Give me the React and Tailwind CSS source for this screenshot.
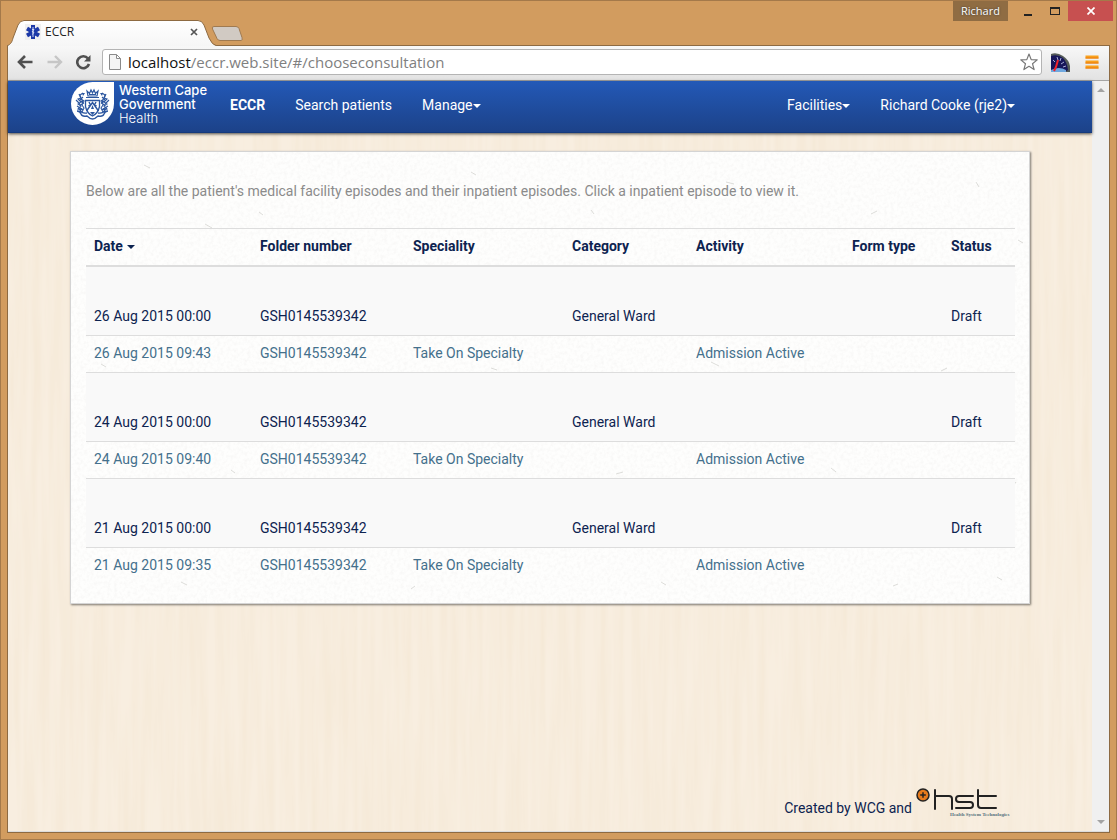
import React from "react";

const columns = [
  { label: "Date", width: "w-[166px]", sorted: true },
  { label: "Folder number", width: "w-[153px]" },
  { label: "Speciality", width: "w-[159px]" },
  { label: "Category", width: "w-[124px]" },
  { label: "Activity", width: "w-[156px]" },
  { label: "Form type", width: "w-[99px]" },
  { label: "Status", width: "w-[72px]" },
];

const episodes = [
  { date: "26 Aug 2015", time: "09:43" },
  { date: "24 Aug 2015", time: "09:40" },
  { date: "21 Aug 2015", time: "09:35" },
];

function Caret({ className = "" }) {
  return (
    <svg className={`inline-block h-1 w-2 align-middle ${className}`} viewBox="0 0 8 4" fill="currentColor" aria-hidden="true">
      <path d="M0 0h8L4 4z" />
    </svg>
  );
}

function WoodTexture() {
  return (
    <svg className="pointer-events-none absolute inset-0 h-full w-full" aria-hidden="true">
      <filter id="wood" x="0" y="0" width="100%" height="100%">
        <feTurbulence type="fractalNoise" baseFrequency="0.12 0.006" numOctaves="3" seed="4" />
        <feColorMatrix values="0 0 0 0 0.84  0 0 0 0 0.7  0 0 0 0 0.5  0.4 0 0 0 -0.11" />
      </filter>
      <rect width="100%" height="100%" filter="url(#wood)" />
    </svg>
  );
}

function PaperTexture() {
  return (
    <svg className="pointer-events-none absolute inset-0 h-full w-full" aria-hidden="true">
      <filter id="paper" x="0" y="0" width="100%" height="100%">
        <feTurbulence type="fractalNoise" baseFrequency="0.3" numOctaves="3" seed="9" />
        <feColorMatrix values="0 0 0 0 0.5  0 0 0 0 0.47  0 0 0 0 0.46  0.2 0 0 0 -0.08" />
      </filter>
      <rect width="100%" height="100%" filter="url(#paper)" />
      <g fill="none" stroke="#cfcfca" strokeWidth="1" opacity=".7">
        <path d="M73 13l6 3M188 60l4 3M134 72l7 4M400 20l5 3M520 58l3 4M655 30l8 2M800 62l6-3M905 30l3 5M947 88l5 3M30 212l5 3M420 216l6 2M640 210l8 4M870 219l6-3M160 318l4 3M545 322l7-2M760 316l5 4M945 330l-4 5M110 430l6 3M340 437l4-3M590 430l5 3M822 434l5-2M926 425l5 3" />
      </g>
    </svg>
  );
}

function TabStrip() {
  return (
    <div className="flex h-[45px] items-start">
      <div className="relative mt-[19px] flex h-[26px] w-[212px] items-center pb-[2px] pl-[18px]">
        <svg className="absolute inset-0 h-full w-full" viewBox="0 0 212 26" aria-hidden="true">
          <defs>
            <linearGradient id="tab" x2="0" y2="1">
              <stop stopColor="#fff" />
              <stop offset="1" stopColor="#f6f6f6" />
            </linearGradient>
          </defs>
          <path d="M0 26C4 24 5 22 6 18L11 5Q13 .5 17 .5H191Q195 .5 197 5L202 18Q205 25 210 26Z" fill="url(#tab)" />
          <path d="M0 26C4 24 5 22 6 18L11 5Q13 .5 17 .5H191Q195 .5 197 5L202 18Q205 25 210 26" fill="none" stroke="#8d6a42" />
        </svg>
        <svg className="relative h-4 w-4" viewBox="0 0 16 16" aria-hidden="true">
          <rect width="16" height="16" fill="#f0f0f0" />
          <path d="M8 1v14M2 4.500l12 7M2 11.500l12-7" stroke="#1c39a8" strokeWidth="4" />
          <path d="M8 3v10M7 5.500h2L7 8h2L7.500 10.500" fill="none" stroke="#dce4fa" strokeWidth=".9" />
        </svg>
        <span className="relative ml-1 font-['Open_Sans'] text-xs text-[#222]">ECCR</span>
        <button aria-label="Close tab" className="relative mr-[21px] ml-auto">
          <svg className="h-2 w-2" viewBox="0 0 8 8" aria-hidden="true">
            <path d="M1 1l6 6M7 1L1 7" stroke="#555" strokeWidth="1.700" />
          </svg>
        </button>
      </div>
      <button aria-label="New tab" className="mt-6 -ml-2">
        <svg className="h-4 w-8" viewBox="0 0 32 16" aria-hidden="true">
          <path d="M3 1.500h22q2 0 3 2l3 9q1 3-1 3H9q-2 0-3-2L1.500 4q-1-2.500 1.500-2.500z" fill="#d1cac3" stroke="#a07a50" />
        </svg>
      </button>
      <div className="ml-auto flex h-5 items-stretch font-['Open_Sans'] text-[11px] text-white">
        <button className="w-[55px] bg-[#8f6c43] [text-shadow:0_0_2px_#333]">Richard</button>
        <button aria-label="Minimize" className="flex w-9 items-end justify-center pb-1 pl-1">
          <svg className="h-1 w-2" viewBox="0 0 8 4" aria-hidden="true"><path d="M0 1h8v2H0z" fill="#222" /></svg>
        </button>
        <button aria-label="Maximize" className="flex w-6 items-center justify-center pr-[2px]">
          <svg className="h-2 w-[10px]" viewBox="0 0 10 8" aria-hidden="true"><path d="M0 0h10v8H0zM1 2v5h8V2z" fill="#222" fillRule="evenodd" /></svg>
        </button>
        <button aria-label="Close window" className="-mr-[3px] flex w-[45px] items-center justify-center bg-[#c75050]">
          <svg className="h-2 w-2" viewBox="0 0 8 8" aria-hidden="true"><path d="M.5.5l7 7M7.500.5l-7 7" stroke="#fff" strokeWidth="1.700" /></svg>
        </button>
      </div>
    </div>
  );
}

function Toolbar() {
  return (
    <div className="flex h-9 items-center border-t border-b border-t-[#8d6a42] border-b-[#a5a5a5] bg-linear-to-b from-[#f8f8f8] to-[#e2e2e2] pr-[10px] pb-[2px] pl-[9px]">
      <button aria-label="Back">
        <svg className="h-4 w-4" viewBox="0 0 16 16" fill="none" stroke="#505050" strokeWidth="2.600" aria-hidden="true">
          <path d="M15.500 8H2.500M8 2L2 8l6 6" />
        </svg>
      </button>
      <button aria-label="Forward" className="ml-[14px]">
        <svg className="h-4 w-4" viewBox="0 0 16 16" fill="none" stroke="#c6c6c6" strokeWidth="2.400" aria-hidden="true">
          <path d="M.5 8h13M8 2l6 6-6 6" />
        </svg>
      </button>
      <button aria-label="Reload" className="ml-3">
        <svg className="h-4 w-4" viewBox="0 0 16 16" aria-hidden="true">
          <path d="M13 4.500A6 6 0 1 0 14 10" fill="none" stroke="#505050" strokeWidth="2.600" />
          <path d="M15.500 1v6.500H9z" fill="#505050" />
        </svg>
      </button>
      <form className="ml-[11px] flex h-[26px] min-w-0 flex-1 items-center rounded-[3px] border border-[#b4b4b4] bg-white px-[6px]" onSubmit={(e) => e.preventDefault()}>
        <svg className="h-4 w-3 shrink-0" viewBox="0 0 12 16" fill="#f4f4f4" stroke="#8a8a8a" aria-hidden="true">
          <path d="M.5.5h7l4 4v11H.5zM7.500.5v4h4" />
        </svg>
        <div className="relative ml-[7px] min-w-0 flex-1 font-['Open_Sans'] text-[15px] leading-6">
          <div className="pointer-events-none truncate text-[#808080]" aria-hidden="true">
            <span className="text-[#111]">localhost</span>/eccr.web.site/#/chooseconsultation
          </div>
          <input
            aria-label="Address"
            defaultValue="localhost/eccr.web.site/#/chooseconsultation"
            className="absolute inset-0 w-full bg-transparent text-transparent caret-black outline-none"
          />
        </div>
        <button type="button" aria-label="Bookmark this page" className="-mr-[3px]">
          <svg className="h-[18px] w-[18px]" viewBox="0 0 18 18" fill="#fff" stroke="#777" strokeWidth="1.200" strokeLinejoin="round" aria-hidden="true">
            <path d="M9 1l2.200 5.600 6 .3-4.700 3.800 1.600 5.900L9 13.300l-5.100 3.300 1.600-5.900L.8 6.900l6-.3z" />
          </svg>
        </button>
      </form>
      <button aria-label="Speed extension" className="ml-[9px]">
        <svg className="h-[19px] w-[19px]" viewBox="0 0 19 19" aria-hidden="true">
          <path d="M0 1Q6-1 12 3Q18 7 19 13V19H0z" fill="#555c58" />
          <path d="M0 3Q7 1 12 5Q16 9 17 17L14 19H0z" fill="#17165a" />
          <path d="M0 17q8-4 15 0v2H0z" fill="#6fa8df" />
          <path d="M6 4l1 3M10 5L9 8M13 9l-3 2M15 13l-3 1M2 7l2 2" stroke="#a9afd8" />
          <path d="M7 7L5 14 3 18" stroke="#f0212b" strokeWidth="2" fill="none" />
        </svg>
      </button>
      <button aria-label="Menu" className="ml-[15px]">
        <svg className="h-[14px] w-[14px]" viewBox="0 0 14 14" aria-hidden="true">
          <path d="M.5.5h13v3H.5zM.5 5.500h13v3H.5zM.5 10.500h13v3H.5z" fill="#f9a11b" />
          <path d="M.5 3h13M.5 8h13M.5 13h13" stroke="#e8760c" />
        </svg>
      </button>
    </div>
  );
}

function Crest() {
  return (
    <svg className="h-[43px] w-[43px]" viewBox="0 0 43 43" aria-hidden="true">
      <path d="M21.500 0H43v21.500A21.500 21.500 0 1 1 21.500 0z" fill="#fff" />
      <g fill="none" stroke="#2b569f" strokeWidth="1.100">
        <path d="M16 9l1 5h9l1-5-2.500 2.500L23 8l-1.500 3L20 8l-1.500 3.500zM15 15.500h13M18 12.500h7" strokeWidth="1.200" />
        <path d="M14.500 18.500h14v6q-1.500 7-7 9.500-5.500-2.500-7-9.500z" strokeWidth="1.300" />
        <path d="M15.500 29l6-8.500 6 8.500M18 20l1.500 3-2 1M25 20l-1.500 3 2 1" strokeWidth="1.400" />
        <path d="M12 11l-3 2 1 3-3 1 3 3-3 2 3 2-3 3 3 1M8 12l2 5 3 2-2 4 2 3-2 4M5 18l4 4M6 24l6 4M12 15l-3 3M13 21l-4 2" />
        <path d="M31 11l3 2-1 3 3 1-3 3 3 2-3 2 3 3-3 1M35 12l-2 5-3 2 2 4-2 3 2 4M38 18l-4 4M37 24l-6 4M31 15l3 3M30 21l4 2" />
        <path d="M6 29q3 0 4 3t6 2q3 3 5.500 3t5.500-3q5 1 6-2t4-3M9 28q2 4 7 3M34 28q-2 4-7 3" strokeWidth="1.300" />
      </g>
      <path d="M20 27h3l-1.500-4zM19 30h5l-2.500 3zM9 19l3-1v4zM34 19l-3-1v4zM11 11h3l-2 3zM32 11h-3l2 3zM8 25l4 2-3 2zM35 25l-4 2 3 2z" fill="#2b569f" />
    </svg>
  );
}

function Navbar() {
  const item = "px-[15px] py-[14px] whitespace-nowrap";
  return (
    <header className="relative z-10 h-[52px] border-b border-[#163a7c] bg-linear-to-b from-[#2359b7] to-[#1c4289] text-white shadow-[0_1px_3px_rgba(0,0,0,0.7)]">
      <div className="mx-auto flex max-w-[960px] items-start text-sm leading-5">
        <a href="#home" className="flex w-[145px] items-start pt-px pl-px" aria-label="Western Cape Government Health">
          <Crest />
          <span className="ml-[5px] flex flex-col pt-px font-[Inter] text-[13px] leading-[14px] font-medium whitespace-nowrap">
            <span>Western Cape</span>
            <span>Government</span>
            <span className="font-light">Health</span>
          </span>
        </a>
        <nav className="flex flex-1">
          <a href="#eccr" className={`${item} font-bold`}>ECCR</a>
          <a href="#search" className={item}>Search patients</a>
          <button className={item}>Manage<Caret /></button>
          <button className={`${item} ml-auto`}>Facilities<Caret /></button>
          <button className={item}>Richard Cooke (rje2)<Caret /></button>
        </nav>
      </div>
    </header>
  );
}

function EpisodeTable() {
  const cell = "border-b border-[#ddd] px-2 pb-[9px]";
  return (
    <table className="w-full table-fixed border-separate border-spacing-0 text-left">
      <thead>
        <tr>
          {columns.map((c) => (
            <th key={c.label} scope="col" className={`${c.width} border-t border-b-2 border-[#ddd] px-2 pt-[7px] pb-[9px] font-bold whitespace-nowrap text-[#0d2350]`}>
              {c.label}
              {c.sorted && <Caret className="ml-1" />}
            </th>
          ))}
        </tr>
      </thead>
      <tbody>
        {episodes.map((e, i) => {
          const group = `${cell} pt-[39px]`;
          const child = `${i === episodes.length - 1 ? "px-2 pb-[9px]" : cell} pt-[7px]`;
          return (
            <React.Fragment key={e.date}>
              <tr className="bg-[#f9f9f9]">
                <td className={group}>{e.date} 00:00</td>
                <td className={group}>GSH0145539342</td>
                <td className={group} />
                <td className={group}>General Ward</td>
                <td className={group} />
                <td className={group} />
                <td className={group}>Draft</td>
              </tr>
              <tr className="cursor-pointer text-[#44708c]">
                <td className={child}><a href="#episode">{e.date} {e.time}</a></td>
                <td className={child}>GSH0145539342</td>
                <td className={child}>Take On Specialty</td>
                <td className={child} />
                <td className={child}>Admission Active</td>
                <td className={child} />
                <td className={child} />
              </tr>
            </React.Fragment>
          );
        })}
      </tbody>
    </table>
  );
}

function HstLogo() {
  return (
    <span className="flex w-[98px] flex-col">
      <svg className="h-6 w-[82px]" viewBox="0 0 82 24" aria-hidden="true">
        <circle cx="7" cy="8" r="6" fill="#e57a1c" stroke="#222" strokeWidth="1.500" />
        <path d="M7 5.200v5.600M4.200 8h5.600" stroke="#222" strokeWidth="1.500" />
        <g fill="none" stroke="#222" strokeWidth="2" strokeLinecap="round" strokeLinejoin="round">
          <path d="M19 3v19M19 9h14q3 0 3 3v10" />
          <path d="M57 9H43q-3 0-3 3t3 3h11q3 0 3 3t-3 3H40" />
          <path d="M62 3v15q0 3 3 3h15M62 9h18" />
        </g>
      </svg>
      <span className="ml-[34px] font-['Liberation_Serif'] text-[5px] leading-[8px] font-bold whitespace-nowrap text-[#54707c]">
        Health System Technologies
      </span>
    </span>
  );
}

function Scrollbar() {
  return (
    <div className="flex w-[17px] shrink-0 flex-col items-center justify-between bg-[#f0f0f0] py-[7px] text-[#a3a3a3]" aria-hidden="true">
      <Caret className="rotate-180" />
      <Caret />
    </div>
  );
}

export default function App() {
  return (
    <div className="flex min-h-screen flex-col border border-[#a4794a] bg-[#d29c5f] px-[6px] pb-[6px] font-[Roboto,sans-serif]">
      <TabStrip />
      <div className="-mt-px flex flex-1 flex-col border-r border-b border-l border-[#8d6a42] bg-[#dcdcdc]">
        <Toolbar />
        <div className="flex flex-1 pb-px">
          <div className="relative flex min-w-0 flex-1 flex-col bg-[#f8eee0] text-sm leading-5 text-[#0d2350]">
            <WoodTexture />
            <Navbar />
            <main className="relative mx-auto mt-[18px] w-full max-w-[960px] border border-[#d4d4d4] bg-[#fefefd] px-[15px] pb-[19px] shadow-[1px_1px_2px_rgba(0,0,0,0.5)]">
              <PaperTexture />
              <div className="relative pt-[29px]">
                <p className="mb-[27px] text-[#8b8b8b]">
                  Below are all the patient's medical facility episodes and their inpatient episodes. Click a inpatient episode to view it.
                </p>
                <EpisodeTable />
              </div>
            </main>
            <footer className="relative mx-auto mt-auto flex w-full max-w-[960px] items-end justify-end gap-1 pr-4 pb-3">
              <span className="mb-px">Created by WCG and</span>
              <HstLogo />
            </footer>
          </div>
          <Scrollbar />
        </div>
      </div>
    </div>
  );
}
